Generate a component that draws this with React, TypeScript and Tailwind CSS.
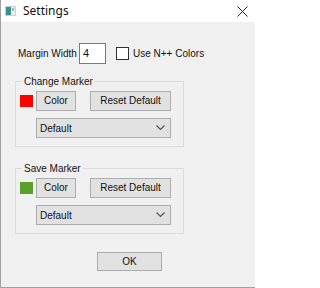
import React from "react";

function Chevron() {
  return (
    <svg width="9" height="6" viewBox="0 0 9 6" className="text-[#555]">
      <path d="M0.5 0.5 L4.5 4.5 L8.5 0.5" fill="none" stroke="currentColor" strokeWidth="1.2" />
    </svg>
  );
}

function MarkerGroup({ title, swatch }: { title: string; swatch: string }) {
  return (
    <div className="relative ml-[14px] w-[169px] border border-[#dcdcdc] pl-[4px] pt-[9px] pb-[8px]">
      <span className="absolute -top-[7px] left-[6px] bg-[#f0f0f0] px-[2px] leading-[13px]">{title}</span>
      <div className="flex items-center">
        <div className={`w-[13px] h-[12px] ${swatch}`} />
        <button className="ml-[3px] w-[40px] h-[20px] border border-[#adadad] bg-[#e1e1e1] leading-none">Color</button>
        <button className="ml-[14px] w-[81px] h-[20px] border border-[#adadad] bg-[#e1e1e1] leading-none">Reset Default</button>
      </div>
      <div className="ml-[16px] mt-[7px] w-[135px] h-[20px] border border-[#adadad] bg-[#e1e1e1] flex items-center justify-between pl-[3px] pr-[5px]">
        <span>Default</span>
        <Chevron />
      </div>
    </div>
  );
}

export default function App() {
  return (
    <div
      className="w-[255px] h-[288px] bg-[#f0f0f0] border-l border-b border-[#a0a0a0] flex flex-col text-[10px] text-[#111]"
      style={{ fontFamily: '"Liberation Sans", Arial, sans-serif' }}
    >
      {/* Title bar */}
      <div className="h-[22px] bg-white flex items-center shrink-0">
        <svg width="11" height="10" viewBox="0 0 11 10" className="ml-[4px]">
          <rect x="0" y="0" width="11" height="10" fill="#c8d0d8" />
          <rect x="1" y="1" width="5" height="8" fill="#3f8f8f" />
          <rect x="6" y="1" width="4" height="8" fill="#e8ecef" />
          <rect x="7" y="2" width="2" height="3" fill="#9bb" />
        </svg>
        <span className="ml-[7px] text-[12px]" style={{ fontFamily: '"Noto Sans", "Liberation Sans", sans-serif' }}>Settings</span>
        <svg width="11" height="11" viewBox="0 0 11 11" className="ml-auto mr-[7px]">
          <path d="M0.5 0.5 L10.5 10.5 M10.5 0.5 L0.5 10.5" stroke="#222" strokeWidth="1" />
        </svg>
      </div>

      {/* Margin width row */}
      <div className="flex items-center mt-[21px] h-[21px] pl-[17px] whitespace-nowrap">
        <span className="w-[58px] shrink-0">Margin Width</span>
        <div className="ml-[3px] w-[27px] h-[21px] shrink-0 border border-[#7a7a7a] bg-white flex items-center pl-[3px] text-[11px]">4</div>
        <div className="ml-[10px] w-[13px] h-[13px] shrink-0 border border-[#333] bg-white" />
        <span className="ml-[4px]">Use N++ Colors</span>
      </div>

      <div className="mt-[17px]">
        <MarkerGroup title="Change Marker" swatch="bg-[#ff0000]" />
      </div>
      <div className="mt-[21px]">
        <MarkerGroup title="Save Marker" swatch="bg-[#5aa02c]" />
      </div>

      <button className="ml-[96px] mt-[18px] w-[65px] h-[19px] border border-[#adadad] bg-[#e1e1e1] leading-none">OK</button>
    </div>
  );
}
